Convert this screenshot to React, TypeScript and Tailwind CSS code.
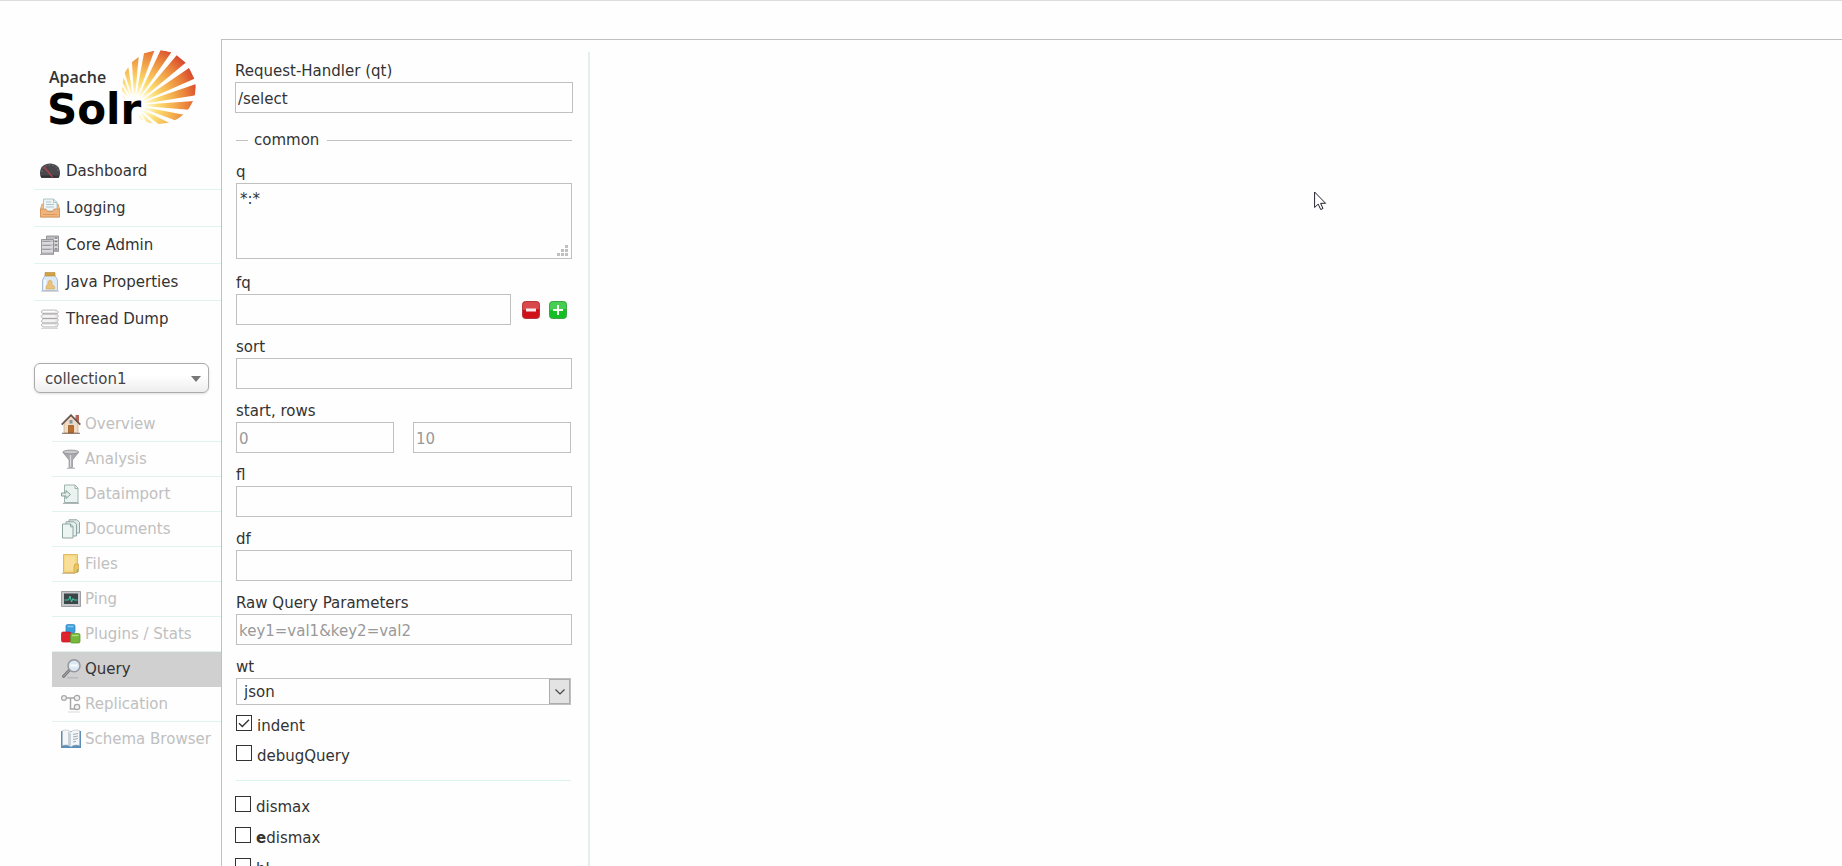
import { useState } from "react";
import type { ReactNode } from "react";

type NavItem = {
  label: string;
  icon: ReactNode;
};

const mainNav: NavItem[] = [
  { label: "Dashboard", icon: <DashboardIcon /> },
  { label: "Logging", icon: <LoggingIcon /> },
  { label: "Core Admin", icon: <CoreAdminIcon /> },
  { label: "Java Properties", icon: <JarIcon /> },
  { label: "Thread Dump", icon: <ThreadDumpIcon /> },
];

const coreNav: NavItem[] = [
  { label: "Overview", icon: <HouseIcon /> },
  { label: "Analysis", icon: <FunnelIcon /> },
  { label: "Dataimport", icon: <ImportIcon /> },
  { label: "Documents", icon: <DocumentsIcon /> },
  { label: "Files", icon: <FolderIcon /> },
  { label: "Ping", icon: <PingIcon /> },
  { label: "Plugins / Stats", icon: <BlocksIcon /> },
  { label: "Query", icon: <MagnifierIcon /> },
  { label: "Replication", icon: <ReplicationIcon /> },
  { label: "Schema Browser", icon: <BookIcon /> },
];

export default function App() {
  return (
    <div className="h-screen overflow-x-hidden overflow-y-auto bg-[#fefefe] [scrollbar-width:none]">
      <div className="relative flex min-h-full border-t border-[#dddddd] pt-[38px] font-['DejaVu_Sans',Verdana,sans-serif] text-[15px] leading-[22px] text-[#333333]">
        <Sidebar />
        <main className="min-w-0 flex-1 border-t border-l border-[#c0c0c0]">
          <QueryForm />
        </main>
        <MouseCursor />
      </div>
    </div>
  );
}

function Sidebar() {
  const [active, setActive] = useState("Query");

  return (
    <aside className="w-[221px] shrink-0 pl-[34px]">
      <a href="#/" className="block pt-[9px] pl-3" aria-label="Apache Solr">
        <SolrLogo />
      </a>

      <nav className="mt-[13px]">
        <ul>
          {mainNav.map((item) => (
            <li
              key={item.label}
              className="border-b border-[#e0f3ee] last:border-b-0"
            >
              <a href="#/" className="flex h-9 items-center gap-[6px] pl-[6px]">
                {item.icon}
                {item.label}
              </a>
            </li>
          ))}
        </ul>
      </nav>

      <div className="relative mt-[26px] w-[175px]">
        <select
          aria-label="Core Selector"
          className="block h-[30px] w-full appearance-none rounded-[6px] border border-[#aaaaaa] bg-linear-to-b from-white from-40% to-[#eeeeee] pt-px pl-[10px] text-[#444444] shadow-sm outline-none"
        >
          <option>collection1</option>
        </select>
        <svg
          viewBox="0 0 10 6"
          className="pointer-events-none absolute top-[13px] right-2 h-[6px] w-[10px]"
        >
          <path d="M0 0h10L5 6z" fill="#777777" />
        </svg>
      </div>

      <ul className="mt-[14px] pl-[18px]">
        {coreNav.map((item) => (
          <li
            key={item.label}
            className={
              item.label === active
                ? "border-b border-[#d0d0d0] bg-[#d0d0d0] text-[#333333]"
                : "border-b border-[#e0f3ee] text-[#c0c0c0] last:border-b-0"
            }
          >
            <a
              href="#/collection1"
              onClick={() => setActive(item.label)}
              className="flex h-[34px] items-center gap-1 pl-[9px] whitespace-nowrap"
            >
              {item.icon}
              {item.label}
            </a>
          </li>
        ))}
      </ul>
    </aside>
  );
}

function QueryForm() {
  return (
    <form className="mt-3 w-[368px] border-r-2 border-[#e3f0ef] pt-2 pr-[15px] pb-10 pl-[13px]">
      <Field label="Request-Handler (qt)" id="qt">
        <input id="qt" type="text" defaultValue="/select" className={inputClass()} />
      </Field>

      <div className="px-px">
        <fieldset className="mt-[17px] border-t border-[#c0c0c0]">
          <legend className="ml-3 pr-2 pl-[6px] leading-[21px]">common</legend>
          <div className="flex flex-col gap-[11px] pt-[10px]">
            <Field label="q" id="q">
              <div className="relative mb-[2px]">
                <textarea
                  id="q"
                  defaultValue="*:*"
                  className="block h-[76px] w-full resize-none border border-[#c0c0c0] bg-transparent px-[3px] py-1 outline-none"
                />
                <svg
                  viewBox="0 0 11 11"
                  className="pointer-events-none absolute right-1 bottom-[3px] size-[11px]"
                  fill="#c0c0c0"
                >
                  <path d="M8 0h3v3H8zM4 4h3v3H4zM8 4h3v3H8zM0 8h3v3H0zM4 8h3v3H4zM8 8h3v3H8z" />
                </svg>
              </div>
            </Field>

            <Field label="fq" id="fq">
              <div className="flex items-center">
                <input id="fq" type="text" className={inputClass("mr-[11px]")} />
                <div className="flex shrink-0 gap-[9px] pr-[5px]">
                  <button type="button" aria-label="Remove filter">
                    <RemoveIcon />
                  </button>
                  <button type="button" aria-label="Add filter">
                    <AddIcon />
                  </button>
                </div>
              </div>
            </Field>

            <Field label="sort" id="sort">
              <input id="sort" type="text" className={inputClass()} />
            </Field>

            <Field label="start, rows" id="start">
              <div className="grid grid-cols-2 gap-[19px] pr-px">
                <input id="start" type="text" placeholder="0" className={inputClass()} />
                <input
                  aria-label="rows"
                  type="text"
                  placeholder="10"
                  className={inputClass()}
                />
              </div>
            </Field>

            <Field label="fl" id="fl">
              <input id="fl" type="text" className={inputClass()} />
            </Field>

            <Field label="df" id="df">
              <input id="df" type="text" className={inputClass()} />
            </Field>

            <Field label="Raw Query Parameters" id="custom">
              <input
                id="custom"
                type="text"
                placeholder="key1=val1&key2=val2"
                className={inputClass()}
              />
            </Field>

            <Field label="wt" id="wt">
              <div className="relative mr-px">
                <select
                  id="wt"
                  className="block h-[27px] w-full appearance-none border border-[#c0c0c0] bg-transparent pl-[7px] outline-none"
                >
                  <option>json</option>
                  <option>xml</option>
                  <option>python</option>
                  <option>ruby</option>
                  <option>php</option>
                  <option>csv</option>
                </select>
                <span className="pointer-events-none absolute inset-y-px right-px flex w-[21px] items-center justify-center border border-[#acacac] bg-[#e3e3e3]">
                  <svg viewBox="0 0 10 6" className="h-[6px] w-[10px]">
                    <path d="M.5.5 5 5 9.5.5" fill="none" stroke="#444444" strokeWidth="1.2" />
                  </svg>
                </span>
              </div>
            </Field>
          </div>

          <div className="mt-[6px] mr-px border-b border-[#daf3ea] pb-[9px]">
            <Checkbox id="indent" defaultChecked>
              indent
            </Checkbox>
            <Checkbox id="debugQuery">debugQuery</Checkbox>
          </div>
        </fieldset>
      </div>

      <div className="mt-[11px] flex flex-col gap-px">
        <Checkbox id="dismax">dismax</Checkbox>
        <Checkbox id="edismax">
          <strong>e</strong>dismax
        </Checkbox>
        <Checkbox id="hl">hl</Checkbox>
      </div>
    </form>
  );
}

function Field({
  label,
  id,
  children,
}: {
  label: string;
  id: string;
  children: ReactNode;
}) {
  return (
    <div>
      <label htmlFor={id} className="block">
        {label}
      </label>
      {children}
    </div>
  );
}

function Checkbox({
  id,
  defaultChecked = false,
  children,
}: {
  id: string;
  defaultChecked?: boolean;
  children: ReactNode;
}) {
  return (
    <div className="relative flex items-start gap-[5px]">
      <input
        id={id}
        type="checkbox"
        defaultChecked={defaultChecked}
        className="peer mt-1 size-4 shrink-0 appearance-none border border-[#333333] bg-white"
      />
      <svg
        viewBox="0 0 16 16"
        className="pointer-events-none absolute top-1 left-0 hidden size-4 peer-checked:block"
      >
        <path d="M3 8.2 6.3 11.5 13 4.8" fill="none" stroke="#333333" strokeWidth="1.4" />
      </svg>
      <label htmlFor={id} className="leading-[30px]">
        {children}
      </label>
    </div>
  );
}

function inputClass(extra = "") {
  return `block h-[31px] w-full min-w-0 border border-[#c0c0c0] bg-transparent px-[2px] pt-[2px] outline-none placeholder:text-[#999999] ${extra}`;
}

// Each ray runs from the focus point through two points on the rim of the sun.
const sunRays = [
  "366,292 366,284",
  "366,273 367,260",
  "368,248 371,233",
  "374,218 385,202",
  "396,186 416,171",
  "432,160 463,152",
  "482,150 514,157",
  "530,166 557,188",
  "567,204 583,236",
  "588,252 588,286",
  "583,303 575,330",
  "560,346 533,364",
  "516,373 484,379",
  "474,386 450,380",
  "444,386 424,370",
];

function SolrLogo() {
  return (
    <svg viewBox="46 48 152 92" className="h-[92px] w-[152px]">
      <defs>
        <radialGradient id="sun" gradientUnits="userSpaceOnUse" cx="403" cy="316" r="212">
          <stop offset="0.16" stopColor="#fffbe0" />
          <stop offset="0.34" stopColor="#fbdc70" />
          <stop offset="0.55" stopColor="#f5b04f" />
          <stop offset="0.75" stopColor="#e9803a" />
          <stop offset="0.9" stopColor="#dc5230" />
          <stop offset="1" stopColor="#c4302b" />
        </radialGradient>
        <clipPath id="rim">
          <circle cx="476" cy="261" r="111" />
        </clipPath>
      </defs>
      <g transform="scale(0.33333)" clipPath="url(#rim)">
        {sunRays.map((ray) => (
          <polygon key={ray} points={`403,316 ${ray}`} fill="url(#sun)" />
        ))}
        <circle cx="403" cy="316" r="32" fill="#fefefe" />
      </g>
      <text
        x="49"
        y="83"
        className="font-['Open_Sans',sans-serif] text-[16px] font-semibold"
        fill="#333333"
      >
        Apache
      </text>
      <text
        x="47"
        y="124"
        className="font-['DejaVu_Sans',sans-serif] text-[42px] font-bold"
        fill="#000000"
      >
        Solr
      </text>
    </svg>
  );
}

function MouseCursor() {
  return (
    <svg
      viewBox="0 0 13 20"
      className="pointer-events-none absolute top-[190px] left-[1314px] h-5 w-[13px]"
    >
      <path
        d="M.6 1v15.5l3.6-3.4 2.5 5.4 2.3-1-2.4-5.2h5z"
        fill="#ffffff"
        stroke="#222233"
        strokeWidth="1"
      />
    </svg>
  );
}

function Icon({ children }: { children: ReactNode }) {
  return (
    <svg viewBox="0 0 20 20" className="size-5 shrink-0" fill="none">
      {children}
    </svg>
  );
}

function DashboardIcon() {
  return (
    <Icon>
      <path d="M0 12C0 6 4 2.500 10 2.500S20 6 20 12c0 3-.8 4.500-2 5H2c-1.200-.5-2-2-2-5z" fill="#4a484c" />
      <path d="M2 11c.3-4.500 3.500-7 8-7s7.700 2.500 8 7" stroke="#77757b" strokeDasharray="1.500 2" />
      <path d="M1 15.500h18" stroke="#333136" strokeWidth="2" />
      <path d="m4 6 8.500 10" stroke="#b8444a" strokeWidth="1.200" />
    </Icon>
  );
}

function LoggingIcon() {
  return (
    <Icon>
      <path d="M2 6h16l1.500 5v8H.5v-8z" fill="#f0c090" stroke="#d19a63" strokeWidth=".8" />
      <path d="M3.500 1h10l3.500 3.500V13H3.500z" fill="#eef5f6" stroke="#9fb6bb" strokeWidth=".8" />
      <path d="M13.500 1v3.500H17" stroke="#9fb6bb" strokeWidth=".8" />
      <path d="M6 4h5M6 6.500h8M6 9h8" stroke="#aec6cb" />
      <path d="M.5 11H6l1.500 2.500h5L14 11h5.500v8H.5z" fill="#efb37b" stroke="#cf925a" strokeWidth=".8" />
      <path d="M3 16.500h14" stroke="#dd9a5d" />
    </Icon>
  );
}

function CoreAdminIcon() {
  return (
    <Icon>
      <path d="M6.500 1h12v15h-12z" fill="#bcbcc0" stroke="#85858b" strokeWidth=".8" />
      <path d="M7 4.500h11M7 8h11M7 12h11" stroke="#ededf0" />
      <path d="M15 3h2M15 6.500h2M15 10h2M15 14h2" stroke="#6c6c73" />
      <path d="M1.500 4.500h12v14.500h-12z" fill="#c6c6ca" stroke="#85858b" strokeWidth=".8" />
      <path d="M2 8h11M2 12h11M2 16h11" stroke="#f0f0f3" />
      <path d="M2.500 6.500h8M2.500 10.500h8M2.500 14.500h8" stroke="#9b9ba2" />
      <path d="M0 19.500h14M14 16.500h5" stroke="#aaaaae" />
    </Icon>
  );
}

function JarIcon() {
  return (
    <Icon>
      <path d="M5 3.500h10L17.500 8v10.500h-15V8z" fill="#dceaf7" stroke="#a9c1d8" />
      <path d="M5 .5h10v3.500H5z" fill="#d1a348" stroke="#b58a38" strokeWidth=".6" />
      <path d="M5 8v9.500" stroke="#ffffff" strokeWidth="1.500" />
      <path d="M6 17v-3l2-1.500V9.500L10 8l2 1.500v3l2.500 2V17z" fill="#e9c27c" stroke="#d3a657" strokeWidth=".6" />
      <path d="M1 19.200h18" stroke="#c3c3c3" />
    </Icon>
  );
}

function ThreadDumpIcon() {
  return (
    <Icon>
      <path
        d="M2.500 1h14l2 2-1.500 2 1.500 2-1.500 2 1.500 2-1.500 2 1.500 2-1.500 3h-14L1 16l2-2-2-2 2-2-2-2.500L3 5 1 3z"
        fill="#e9e8e8"
        stroke="#b9b5b5"
        strokeWidth=".8"
      />
      <path d="M3 4.800h14M3 9.500h14M3 14h14" stroke="#aaa5a5" strokeWidth="1.200" />
      <path d="M3 2.500h12M3 7h12M3 12h12M3 16.500h12" stroke="#ffffff" />
      <path d="M1 19.300h17" stroke="#cccccc" />
    </Icon>
  );
}

function HouseIcon() {
  return (
    <Icon>
      <path d="M14.500 1h3.500v8h-3.500z" fill="#b3655a" />
      <path d="M3 9l7-7.500L17 9v10H3z" fill="#f0dcc4" stroke="#c09a7c" strokeWidth=".6" />
      <path d="M.7 10.700 10 1.200l9.300 9.500" stroke="#6d5650" strokeWidth="1.800" />
      <path d="M8.500 6h3v3.500h-3z" fill="#7a98aa" />
      <path d="M7.500 11.500h5V19h-5z" fill="#b96f2e" stroke="#8c5324" strokeWidth=".7" />
      <path d="M1 19.300h18" stroke="#7d6a5c" />
    </Icon>
  );
}

function FunnelIcon() {
  return (
    <Icon>
      <path d="M2 3.500 8 11v7.500h3.500V11l6-7.500z" fill="#a9a9af" stroke="#87878d" strokeWidth=".6" />
      <ellipse cx="9.800" cy="3" rx="8" ry="1.900" fill="#c9c9ce" stroke="#8b8b91" strokeWidth=".8" />
      <path d="M9.500 6v12" stroke="#dedee2" strokeWidth="1.200" />
      <path d="M6 19.200h8" stroke="#a8a8ab" />
    </Icon>
  );
}

function ImportIcon() {
  return (
    <Icon>
      <path d="M3.500 1H14l3 3v14.500H3.500z" fill="#eaf3f0" stroke="#9fb3ae" />
      <path d="M14 1v3.500h3" stroke="#9fb3ae" />
      <path d="M.5 9h4.500V6.500l4.500 4-4.500 4V12H.5z" fill="#e4ecea" stroke="#87a09a" />
      <path d="M2 19.300h16" stroke="#9aa6a3" />
    </Icon>
  );
}

function DocumentsIcon() {
  return (
    <Icon>
      <path d="M8 .8h8l2.500 2.500V14H8z" fill="#dfe9e7" stroke="#8fa5a0" />
      <path d="M5 2.800h8l2.500 2.500V17H5z" fill="#e5efed" stroke="#8fa5a0" />
      <path d="M1.500 5h8L12 7.500v11.500H1.500z" fill="#edf5f3" stroke="#8fa5a0" />
      <path d="M9.500 5v2.800H12" stroke="#8fa5a0" />
    </Icon>
  );
}

function FolderIcon() {
  return (
    <Icon>
      <path d="M2.500.5h14v18h-14z" fill="#f6d67e" stroke="#d8ae52" strokeWidth=".8" />
      <path d="M4 2.500h10v14H4z" fill="#f9e09a" />
      <path d="M14 10h3.500v7.500L13 19.500v-7z" fill="#eec35f" stroke="#cda047" strokeWidth=".7" />
      <path d="M16.500 15v3" stroke="#63bfc9" strokeWidth="1.500" />
      <path d="M1 19.300h12" stroke="#c8b07a" />
    </Icon>
  );
}

function PingIcon() {
  return (
    <Icon>
      <path d="M.5 2.500h19v15H.5z" fill="#c5c7ca" stroke="#9c9ea2" />
      <path d="M3 4.500h14v10.500H3z" fill="#3c4548" />
      <path d="M3.500 11h4l1.500-4 1.500 6 1.500-3.500 1 1.500H16.500" stroke="#47c8a6" />
    </Icon>
  );
}

function BlocksIcon() {
  return (
    <Icon>
      <rect x="5" y=".5" width="9" height="8.500" rx="1.500" fill="#3f9fdc" stroke="#2c82bd" strokeWidth=".7" />
      <path d="M6.500 2.500h6" stroke="#82c6ef" strokeWidth="1.500" />
      <rect x=".5" y="8" width="9.500" height="10" rx="1.500" fill="#e0222f" stroke="#b51622" strokeWidth=".7" />
      <rect x="9.500" y="9.500" width="9.500" height="9.500" rx="1.500" fill="#76b83c" stroke="#558f26" strokeWidth=".7" />
      <path d="M11 11.500h6.500" stroke="#aede7b" strokeWidth="1.500" />
    </Icon>
  );
}

function MagnifierIcon() {
  return (
    <Icon>
      <path d="M6 18.800h11" stroke="#b5b5b8" strokeWidth="1.200" />
      <path d="m8.500 11-6 6.500" stroke="#77777c" strokeWidth="3" strokeLinecap="round" />
      <path d="m8.500 11-6 6.500" stroke="#b0b0b5" strokeLinecap="round" />
      <circle cx="13" cy="6.800" r="6" fill="#dbe8f3" stroke="#94969c" strokeWidth="1.500" />
      <path d="M9.500 6.500h7" stroke="#f4f9fd" strokeWidth="2.500" />
    </Icon>
  );
}

function ReplicationIcon() {
  return (
    <Icon>
      <path d="M5 4h9M9.500 4v11H14" stroke="#a7a7a7" strokeWidth="1.500" />
      <circle cx="3" cy="4" r="2.400" fill="#f1f1f1" stroke="#a7a7a7" strokeWidth="1.200" />
      <circle cx="16" cy="4" r="2.700" fill="#f1f1f1" stroke="#a7a7a7" strokeWidth="1.200" />
      <circle cx="16" cy="13" r="2.700" fill="#f1f1f1" stroke="#a7a7a7" strokeWidth="1.200" />
      <path d="M7 18h12" stroke="#d9d9d9" />
    </Icon>
  );
}

function BookIcon() {
  return (
    <Icon>
      <path d="M0 2h20v17H0z" fill="#5b8fb9" />
      <path d="M1.500 1.500C5 .5 8 1 10 3c2-2 5-2.500 8.500-1.500v15C15 15.500 12 16 10 18c-2-2-5-2.500-8.500-1.500z" fill="#f4f6f7" stroke="#adbac3" strokeWidth=".6" />
      <path d="M7 2.500c1.500.5 2.500 1.500 3 2.500v12.500l-3-1.500z" fill="#c8d2d9" />
      <path d="M12 5.500l5-1M12 8l5-1M12 10.500l5-1M12 13l3-.6" stroke="#9fabb3" />
    </Icon>
  );
}

function RemoveIcon() {
  return (
    <svg viewBox="0 0 18 18" className="block size-[18px]">
      <rect x=".5" y=".5" width="17" height="17" rx="3" fill="#cf1219" stroke="#b5383a" />
      <path d="M1 9V4a3 3 0 0 1 3-3h10a3 3 0 0 1 3 3v4z" fill="#d9484b" />
      <path d="M4 7.500h10v3H4z" fill="#f7eaea" />
    </svg>
  );
}

function AddIcon() {
  return (
    <svg viewBox="0 0 18 18" className="block size-[18px]">
      <rect x=".5" y=".5" width="17" height="17" rx="3" fill="#14bf26" stroke="#3aa647" />
      <path d="M1 9V4a3 3 0 0 1 3-3h10a3 3 0 0 1 3 3v4z" fill="#45ce52" />
      <path d="M8 4h2v4h4v2h-4v4H8v-4H4V8h4z" fill="#f3fbf3" />
    </svg>
  );
}
